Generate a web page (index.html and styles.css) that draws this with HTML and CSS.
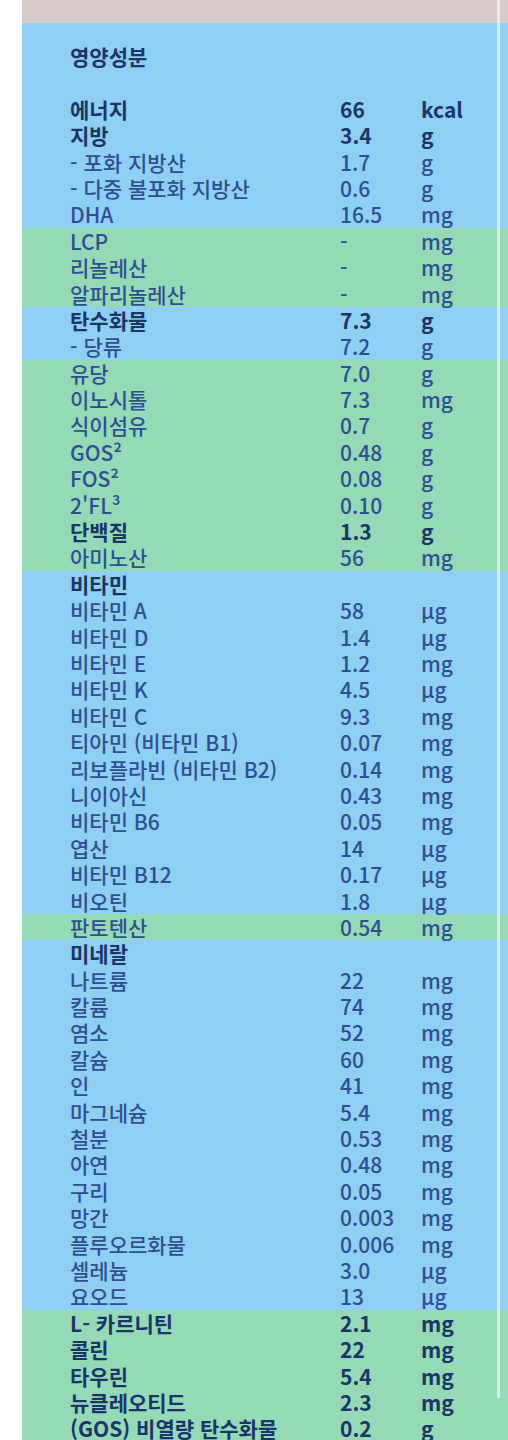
FILE: index.html
```html
<!DOCTYPE html>
<html lang="ko">
<head>
<meta charset="utf-8">
<title>영양성분</title>
<link rel="stylesheet" href="styles.css">
</head>
<body>
<div class="panel">
  <div class="topband"></div>
  <div class="group blue">
    <div class="title">영양성분</div>
    <div class="row b"><span>에너지</span><span>66</span><span>kcal</span></div>
    <div class="row b"><span>지방</span><span>3.4</span><span>g</span></div>
    <div class="row"><span>- 포화 지방산</span><span>1.7</span><span>g</span></div>
    <div class="row"><span>- 다중 불포화 지방산</span><span>0.6</span><span>g</span></div>
    <div class="row"><span>DHA</span><span>16.5</span><span>mg</span></div>
  </div>
  <div class="group green">
    <div class="row"><span>LCP</span><span>-</span><span>mg</span></div>
    <div class="row"><span>리놀레산</span><span>-</span><span>mg</span></div>
    <div class="row"><span>알파리놀레산</span><span>-</span><span>mg</span></div>
  </div>
  <div class="group blue">
    <div class="row b"><span>탄수화물</span><span>7.3</span><span>g</span></div>
    <div class="row"><span>- 당류</span><span>7.2</span><span>g</span></div>
  </div>
  <div class="group green">
    <div class="row"><span>유당</span><span>7.0</span><span>g</span></div>
    <div class="row"><span>이노시톨</span><span>7.3</span><span>mg</span></div>
    <div class="row"><span>식이섬유</span><span>0.7</span><span>g</span></div>
    <div class="row"><span>GOS²</span><span>0.48</span><span>g</span></div>
    <div class="row"><span>FOS²</span><span>0.08</span><span>g</span></div>
    <div class="row"><span>2'FL³</span><span>0.10</span><span>g</span></div>
    <div class="row b"><span>단백질</span><span>1.3</span><span>g</span></div>
    <div class="row"><span>아미노산</span><span>56</span><span>mg</span></div>
  </div>
  <div class="group blue">
    <div class="row b"><span>비타민</span><span></span><span></span></div>
    <div class="row"><span>비타민 A</span><span>58</span><span>µg</span></div>
    <div class="row"><span>비타민 D</span><span>1.4</span><span>µg</span></div>
    <div class="row"><span>비타민 E</span><span>1.2</span><span>mg</span></div>
    <div class="row"><span>비타민 K</span><span>4.5</span><span>µg</span></div>
    <div class="row"><span>비타민 C</span><span>9.3</span><span>mg</span></div>
    <div class="row"><span>티아민 (비타민 B1)</span><span>0.07</span><span>mg</span></div>
    <div class="row"><span>리보플라빈 (비타민 B2)</span><span>0.14</span><span>mg</span></div>
    <div class="row"><span>니이아신</span><span>0.43</span><span>mg</span></div>
    <div class="row"><span>비타민 B6</span><span>0.05</span><span>mg</span></div>
    <div class="row"><span>엽산</span><span>14</span><span>µg</span></div>
    <div class="row"><span>비타민 B12</span><span>0.17</span><span>µg</span></div>
    <div class="row"><span>비오틴</span><span>1.8</span><span>µg</span></div>
  </div>
  <div class="group green">
    <div class="row"><span>판토텐산</span><span>0.54</span><span>mg</span></div>
  </div>
  <div class="group blue">
    <div class="row b"><span>미네랄</span><span></span><span></span></div>
    <div class="row"><span>나트륨</span><span>22</span><span>mg</span></div>
    <div class="row"><span>칼륨</span><span>74</span><span>mg</span></div>
    <div class="row"><span>염소</span><span>52</span><span>mg</span></div>
    <div class="row"><span>칼슘</span><span>60</span><span>mg</span></div>
    <div class="row"><span>인</span><span>41</span><span>mg</span></div>
    <div class="row"><span>마그네슘</span><span>5.4</span><span>mg</span></div>
    <div class="row"><span>철분</span><span>0.53</span><span>mg</span></div>
    <div class="row"><span>아연</span><span>0.48</span><span>mg</span></div>
    <div class="row"><span>구리</span><span>0.05</span><span>mg</span></div>
    <div class="row"><span>망간</span><span>0.003</span><span>mg</span></div>
    <div class="row"><span>플루오르화물</span><span>0.006</span><span>mg</span></div>
    <div class="row"><span>셀레늄</span><span>3.0</span><span>µg</span></div>
    <div class="row"><span>요오드</span><span>13</span><span>µg</span></div>
  </div>
  <div class="group green">
    <div class="row b"><span>L- 카르니틴</span><span>2.1</span><span>mg</span></div>
    <div class="row b"><span>콜린</span><span>22</span><span>mg</span></div>
    <div class="row b"><span>타우린</span><span>5.4</span><span>mg</span></div>
    <div class="row b"><span>뉴클레오티드</span><span>2.3</span><span>mg</span></div>
    <div class="row b"><span>(GOS) 비열량 탄수화물</span><span>0.2</span><span>g</span></div>
  </div>
</div>
</body>
</html>
```
FILE: styles.css
```css
html, body {
  margin: 0;
  padding: 0;
  background: #ffffff;
}
body {
  font-family: "Noto Sans CJK KR", "Noto Sans", sans-serif;
  color: #2e5093;
  width: 508px;
  height: 1440px;
  overflow: hidden;
}
.panel {
  position: relative;
  margin-left: 22px;
  width: 486px;
}
.panel::after {
  content: "";
  position: absolute;
  top: 0;
  bottom: 44px;
  left: 475px;
  width: 3px;
  background: rgba(240, 248, 252, 0.7);
}
.topband {
  height: 23px;
  background: #d8cccb;
}
.blue { background: #8ecff3; }
.green { background: #94dab6; }
.title {
  padding: 20px 0 26.4px 48px;
  height: 26.4px;
  line-height: 26.4px;
  font-size: 21px;
  font-weight: 700;
  color: #1b3569;
}
.row {
  display: grid;
  grid-template-columns: 270px 81px 1fr;
  padding-left: 48px;
  height: 26.4px;
  line-height: 26.4px;
  font-size: 21px;
  font-weight: 500;
  white-space: nowrap;
}
.row.b {
  font-weight: 700;
  color: #1b3569;
}
```
